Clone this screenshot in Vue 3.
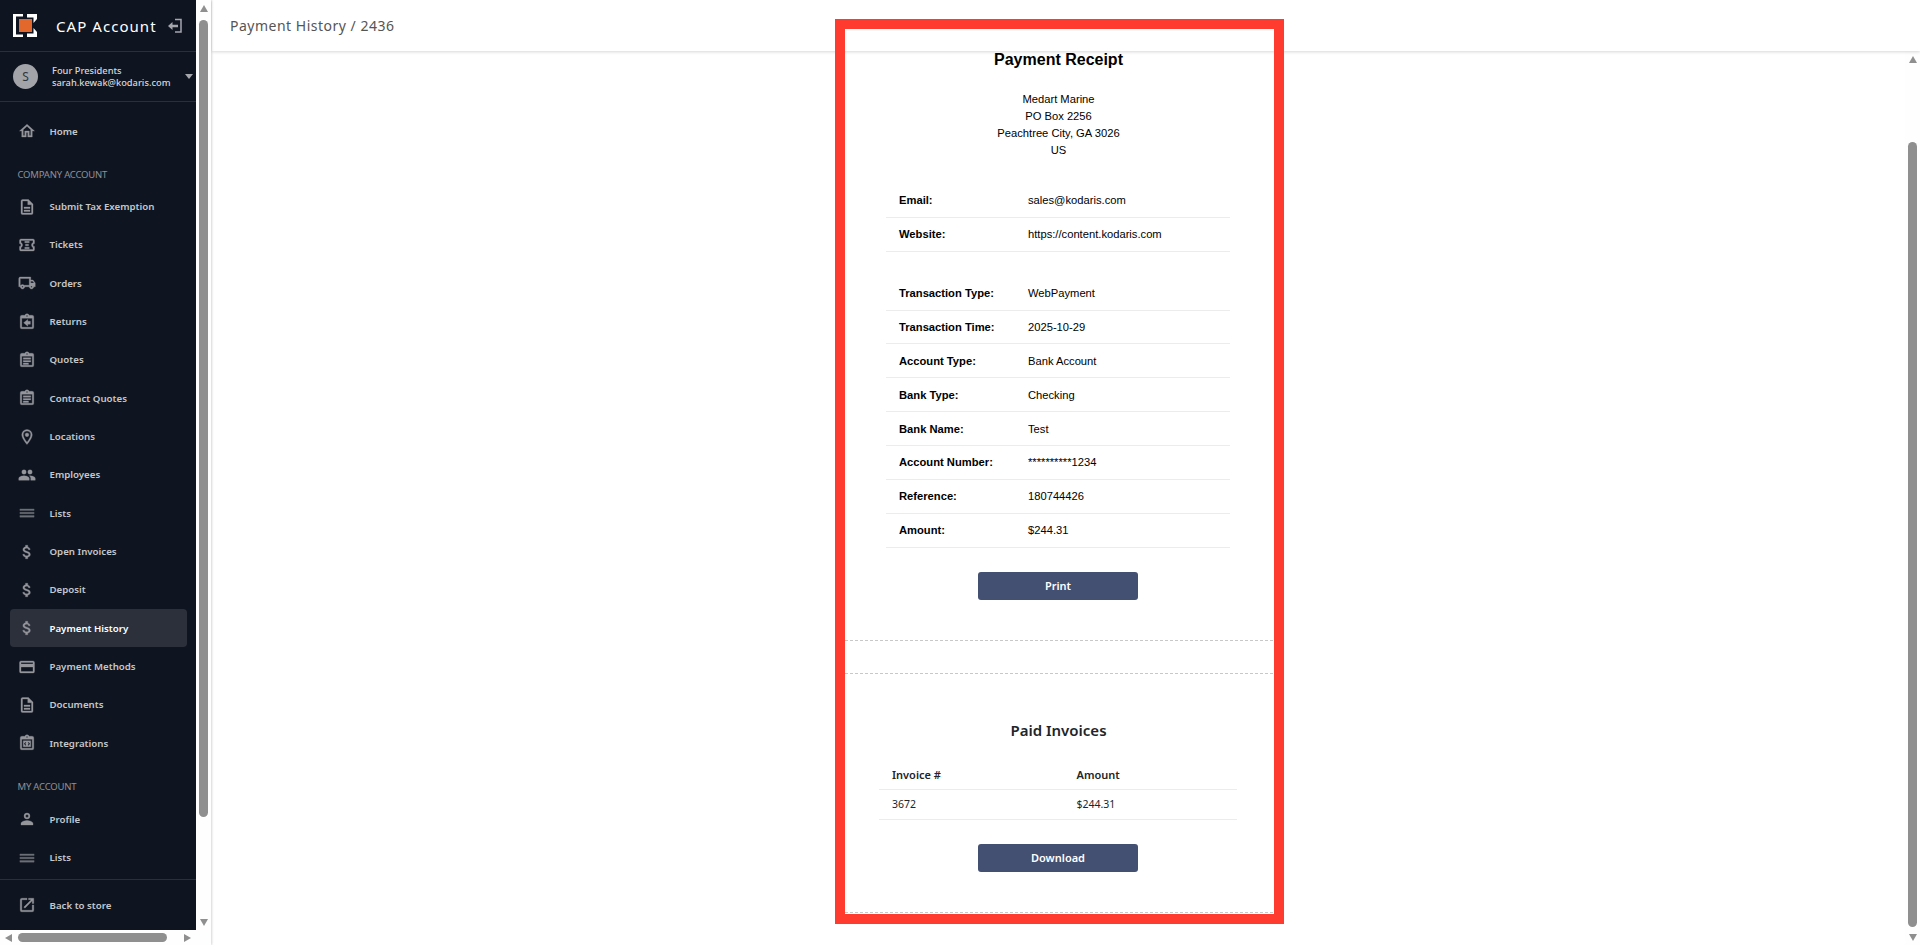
<script setup>
const p = {
  home: 'M12 5.700l5 4.500V18h-2v-6H9v6H7v-7.800l5-4.500M12 3L2 12h3v8h6v-6h2v6h6v-8h3L12 3z',
  doc: 'M14 2H6a2 2 0 0 0-2 2v16a2 2 0 0 0 2 2h12a2 2 0 0 0 2-2V8l-6-6zm4 18H6V4h7v5h5v11zM8 12h8v2H8zm0 4h8v2H8z',
  ticket: 'M22 10V6a2 2 0 0 0-2-2H4a2 2 0 0 0-2 2v4a2 2 0 0 1 0 4v4a2 2 0 0 0 2 2h16a2 2 0 0 0 2-2v-4a2 2 0 0 1 0-4zm-2-1.500a4 4 0 0 0 0 7V18H4v-2.500a4 4 0 0 0 0-7V6h16v2.500zM9 7h6v2H9zm1 4h4v2h-4zm-1 4h6v2H9z',
  truck: 'M20 8h-3V4H3c-1.100 0-2 .900-2 2v11h2c0 1.660 1.340 3 3 3s3-1.340 3-3h6c0 1.660 1.340 3 3 3s3-1.340 3-3h2v-5l-3-4zm-.500 1.500l1.960 2.500H17V9.500h2.500zM6 18c-.550 0-1-.450-1-1s.450-1 1-1 1 .450 1 1-.450 1-1 1zm2.220-3c-.550-.610-1.330-1-2.220-1s-1.670.390-2.220 1H3V6h12v9H8.220zM18 18c-.550 0-1-.450-1-1s.450-1 1-1 1 .450 1 1-.450 1-1 1z',
  ret: 'M19 3h-4.180A3 3 0 0 0 9.180 3H5a2 2 0 0 0-2 2v14a2 2 0 0 0 2 2h14a2 2 0 0 0 2-2V5a2 2 0 0 0-2-2zm-7 0a1 1 0 1 1 0 2 1 1 0 0 1 0-2zm7 16H5V7h14v12zM13 8.500l-5.500 4.500 5.500 4.500V15h3.500v-4H13V8.500z',
  quote: 'M19 3h-4.180A3 3 0 0 0 9.180 3H5a2 2 0 0 0-2 2v14a2 2 0 0 0 2 2h14a2 2 0 0 0 2-2V5a2 2 0 0 0-2-2zm-7 0a1 1 0 1 1 0 2 1 1 0 0 1 0-2zm7 16H5V7h14v12zM7 9h10v2H7zm0 3.500h10v2H7zM7 16h7v2H7z',
  pin: 'M12 2a7 7 0 0 0-7 7c0 5.250 7 13 7 13s7-7.750 7-13a7 7 0 0 0-7-7zm0 17c-2.300-2.900-5-7-5-10a5 5 0 0 1 10 0c0 3-2.700 7.100-5 10zm0-12.500a2.500 2.500 0 1 0 0 5 2.500 2.500 0 0 0 0-5z',
  people: 'M16 11a3 3 0 1 0 0-6 3 3 0 0 0 0 6zm-8 0a3 3 0 1 0 0-6 3 3 0 0 0 0 6zm0 2c-2.330 0-7 1.170-7 3.500V19h14v-2.500C15 14.170 10.330 13 8 13zm8 0c-.29 0-.62.020-.97.050 1.160.840 1.970 1.970 1.970 3.450V19h6v-2.500c0-2.330-4.670-3.500-7-3.500z',
  lists: 'M2.500 6.500h19v2.200h-19zM2.500 11h19v2h-19zM2.500 15.300h19v2.200h-19z',
  dollar: 'M11.800 10.900c-2.270-.590-3-1.200-3-2.150 0-1.090 1.010-1.850 2.700-1.850 1.780 0 2.440.850 2.500 2.100h2.210c-.070-1.720-1.120-3.300-3.210-3.810V3h-3v2.160c-1.940.420-3.500 1.680-3.500 3.610 0 2.310 1.910 3.460 4.700 4.130 2.500.600 3 1.480 3 2.410 0 .690-.490 1.790-2.700 1.790-2.060 0-2.870-.920-2.980-2.100H6.320c.120 2.190 1.760 3.420 3.680 3.830V21h3v-2.150c1.950-.370 3.500-1.500 3.500-3.550 0-2.840-2.430-3.810-4.700-4.400z',
  card: 'M20 4H4a2 2 0 0 0-2 2v12a2 2 0 0 0 2 2h16a2 2 0 0 0 2-2V6a2 2 0 0 0-2-2zm0 14H4v-6h16v6zm0-10H4V6h16v2z',
  integ: 'M19 3h-4.180A3 3 0 0 0 9.180 3H5a2 2 0 0 0-2 2v14a2 2 0 0 0 2 2h14a2 2 0 0 0 2-2V5a2 2 0 0 0-2-2zm-7 0a1 1 0 1 1 0 2 1 1 0 0 1 0-2zm7 16H5V7h14v12zM7 9h10v8H7V9zm3 1.500L7.800 13l2.200 2.500 1-1L9.800 13l1.200-1.500-1-1zm4 0l-1 1 1.200 1.500-1.200 1.500 1 1 2.200-2.500-2.200-2.500z',
  person: 'M12 4a4 4 0 1 0 0 8 4 4 0 0 0 0-8zm0 2a2 2 0 1 1 0 4 2 2 0 0 1 0-4zm0 8c-2.670 0-8 1.340-8 4v2h16v-2c0-2.660-5.330-4-8-4z',
  ext: 'M19 19H5V5h7V3H5a2 2 0 0 0-2 2v14a2 2 0 0 0 2 2h14a2 2 0 0 0 2-2v-7h-2v7zM14 3v2h3.590l-9.830 9.830 1.410 1.410L19 6.410V10h2V3h-7z'
}
const companyItems = [
  { n: 'Submit Tax Exemption', i: p.doc },
  { n: 'Tickets', i: p.ticket },
  { n: 'Orders', i: p.truck },
  { n: 'Returns', i: p.ret },
  { n: 'Quotes', i: p.quote },
  { n: 'Contract Quotes', i: p.quote },
  { n: 'Locations', i: p.pin },
  { n: 'Employees', i: p.people },
  { n: 'Lists', i: p.lists, dim: true },
  { n: 'Open Invoices', i: p.dollar },
  { n: 'Deposit', i: p.dollar },
  { n: 'Payment History', i: p.dollar, active: true },
  { n: 'Payment Methods', i: p.card },
  { n: 'Documents', i: p.doc },
  { n: 'Integrations', i: p.integ }
]
const accountItems = [
  { n: 'Profile', i: p.person },
  { n: 'Lists', i: p.lists, dim: true }
]
const contact = [['Email:', 'sales@kodaris.com'], ['Website:', 'https://content.kodaris.com']]
const details = [
  ['Transaction Type:', 'WebPayment'],
  ['Transaction Time:', '2025-10-29'],
  ['Account Type:', 'Bank Account'],
  ['Bank Type:', 'Checking'],
  ['Bank Name:', 'Test'],
  ['Account Number:', '**********1234'],
  ['Reference:', '180744426'],
  ['Amount:', '$244.31']
]
</script>

<template>
  <div class="page">
    <div class="left">
      <div class="left-top">
        <aside class="sidebar">
          <div class="brand">
            <svg class="logo" viewBox="0 0 24 23" width="24" height="23">
              <path fill="#fff" d="M0 0H10V2.500H3V20.500H10V23H0zM14 0H24V5L20.500 9V3.500H14zM14 23H24V18L20.500 14V19.500H14z"/>
              <rect x="6" y="5" width="13" height="13" fill="#e2682c"/>
            </svg>
            <span class="brand-name">CAP Account</span>
            <svg class="exit" viewBox="0 0 16 16" width="16" height="16">
              <path fill="none" stroke="#a5a7ad" stroke-width="1.500" d="M8 1.500h6v12.500H8"/>
              <path fill="#a5a7ad" d="M1 8l4.500-4v2.800H11v2.400H5.500V12z"/>
            </svg>
          </div>
          <div class="user">
            <div class="avatar">S</div>
            <div class="user-text">
              <div>Four Presidents</div>
              <div>sarah.kewak@kodaris.com</div>
            </div>
            <span class="caret"></span>
          </div>
          <nav class="nav">
            <a class="item">
              <svg viewBox="0 0 24 24"><path :d="p.home"/></svg>
              <span>Home</span>
            </a>
            <div class="section first">COMPANY ACCOUNT</div>
            <a v-for="it in companyItems" :key="it.n" class="item" :class="{ active: it.active, dim: it.dim }">
              <svg viewBox="0 0 24 24"><path :d="it.i"/></svg>
              <span>{{ it.n }}</span>
            </a>
            <div class="section">MY ACCOUNT</div>
            <a v-for="it in accountItems" :key="it.n" class="item" :class="{ dim: it.dim }">
              <svg viewBox="0 0 24 24"><path :d="it.i"/></svg>
              <span>{{ it.n }}</span>
            </a>
          </nav>
          <div class="foot">
            <a class="item">
              <svg viewBox="0 0 24 24"><path :d="p.ext"/></svg>
              <span>Back to store</span>
            </a>
          </div>
        </aside>
        <div class="vbar side-v">
          <i class="arrow up"></i>
          <b class="thumb side-thumb"></b>
          <i class="arrow down"></i>
        </div>
      </div>
      <div class="hbar">
        <i class="arrow lft"></i>
        <b class="hthumb"></b>
        <i class="arrow rgt"></i>
      </div>
    </div>

    <div class="main">
      <header class="topbar">Payment History / 2436</header>
      <div class="main-body">
        <div class="content">
          <div class="receipt">
            <section class="print-part">
              <h2>Payment Receipt</h2>
              <address>Medart Marine<br>PO Box 2256<br>Peachtree City, GA 3026<br>US</address>
              <div class="table">
                <div v-for="r in contact" :key="r[0]" class="row"><strong>{{ r[0] }}</strong><span>{{ r[1] }}</span></div>
              </div>
              <div class="table second">
                <div v-for="r in details" :key="r[0]" class="row"><strong>{{ r[0] }}</strong><span>{{ r[1] }}</span></div>
              </div>
              <div class="btn-wrap"><button class="btn">Print</button></div>
            </section>
            <div class="cut"></div>
            <section class="paid">
              <h3>Paid Invoices</h3>
              <div class="inv head"><span>Invoice #</span><span>Amount</span></div>
              <div class="inv"><span>3672</span><span>$244.31</span></div>
              <div class="btn-wrap"><button class="btn">Download</button></div>
            </section>
          </div>
        </div>
        <div class="vbar main-v">
          <i class="arrow up"></i>
          <b class="thumb main-thumb"></b>
          <i class="arrow down"></i>
        </div>
      </div>
    </div>
    <div class="frame"></div>
  </div>
</template>

<style scoped>
.page { position: relative; display: flex; width: 1920px; height: 945px; overflow: hidden; background: #fff; font-family: "Noto Sans", sans-serif; }
.left { width: 211px; flex: none; display: flex; flex-direction: column; box-shadow: 1px 0 2px rgba(0,0,0,.16); z-index: 2; }
.left-top { flex: 1; min-height: 0; display: flex; }
.sidebar { width: 196px; flex: none; background: #0f1520; display: flex; flex-direction: column; overflow: hidden; }
.brand { height: 51px; flex: none; display: flex; align-items: center; padding-left: 13px; border-bottom: 1px solid #2a2f3a; }
.logo { flex: none; }
.brand-name { margin-left: 19px; color: #fff; font-size: 15px; letter-spacing: 1.05px; white-space: nowrap; }
.exit { margin-left: 10px; flex: none; }
.user { height: 49px; flex: none; display: flex; align-items: center; padding-left: 13px; border-bottom: 1px solid #2a2f3a; }
.avatar { width: 25px; height: 25px; border-radius: 50%; background: #a2a4a9; color: #30343c; font-size: 12px; display: flex; align-items: center; justify-content: center; flex: none; }
.user-text { margin-left: 14px; color: #d5d7da; font-size: 9.300px; line-height: 12px; font-weight: 500; white-space: nowrap; width: 133px; flex: none; }
.caret { border: 4.500px solid transparent; border-top: 5px solid #a5a7ad; border-bottom: 0; flex: none; }
.nav { flex: 1; min-height: 0; padding-top: 10px; }
.item { display: flex; align-items: center; height: 38.350px; margin: 0 9px 0 10px; padding-left: 8px; border-radius: 4px; color: #c5c7cb; font-size: 9.700px; font-weight: 600; white-space: nowrap; }
.item svg { width: 18px; height: 18px; fill: #94969c; stroke: #94969c; stroke-width: .4; flex: none; }
.item.dim svg { opacity: .7; }
.item span { margin-left: 13.500px; }
.item.active { background: #2c303b; color: #fff; }
.section { color: #8f9196; font-size: 9.500px; letter-spacing: -.2px; height: 18px; line-height: 18px; padding-left: 17.500px; margin-top: 15.400px; margin-bottom: 4.300px; }
.section.first { margin-top: 16px; margin-bottom: 3px; }
.foot { flex: none; height: 50px; border-top: 1px solid #2a2f3a; display: flex; align-items: center; }
.foot .item { flex: 1; }
.vbar { width: 15px; flex: none; background: #fefefe; display: flex; flex-direction: column; align-items: center; }
.thumb { display: block; width: 9px; border-radius: 5px; background: #8f8f8f; }
.side-thumb { height: 797px; margin-top: 8px; }
.main-thumb { height: 785px; margin-top: 79px; }
.arrow { display: block; width: 0; height: 0; border: 4px solid transparent; flex: none; }
.arrow.up { border-top: 0; border-bottom: 7px solid #8f8f8f; margin-top: 5px; }
.arrow.down { border-bottom: 0; border-top: 7px solid #8f8f8f; margin-top: auto; margin-bottom: 4px; }
.hbar { height: 15px; flex: none; background: #fefefe; display: flex; align-items: center; padding: 0 4px; }
.hthumb { display: block; width: 149px; height: 9px; border-radius: 5px; background: #8f8f8f; margin-left: 6px; }
.arrow.lft { border-left: 0; border-right: 7px solid #8f8f8f; margin-left: 1px; }
.arrow.rgt { border-right: 0; border-left: 7px solid #8f8f8f; margin-left: 17px; }
.main { flex: 1; min-width: 0; display: flex; flex-direction: column; margin-left: 1px; }
.topbar { height: 51px; flex: none; padding-left: 18px; line-height: 51px; color: #555; font-size: 14px; letter-spacing: .5px; box-shadow: 0 1px 3px rgba(0,0,0,.16); background: #fff; position: relative; z-index: 1; }
.main-body { flex: 1; min-height: 0; display: flex; }
.content { flex: 1; min-width: 0; display: flex; justify-content: center; overflow: hidden; }
.receipt { width: 428px; flex: none; color: #000; }
.print-part { font-family: "Liberation Sans", Arial, sans-serif; font-size: 11.200px; }
h2 { margin: 0; text-align: center; font-size: 16px; font-weight: 700; line-height: 18px; }
address { margin-top: 22px; text-align: center; font-style: normal; line-height: 17px; }
.table { margin: 25px 43px 0 41.500px; }
.table.second { margin-top: 25px; }
.row { height: 33.860px; display: flex; align-items: center; border-bottom: 1px solid #ececec; box-sizing: border-box; padding-left: 13px; }
.row strong { width: 129px; flex: none; }
.btn-wrap { display: flex; justify-content: center; margin-top: 24px; padding-right: 1px; }
.btn { width: 160px; height: 28px; border: 0; border-radius: 3px; background: #445071; color: #fff; font-size: 11px; font-weight: 600; font-family: "Noto Sans", sans-serif; padding: 0; }
.cut { height: 32px; margin-top: 40px; border-top: 1px dashed #c8c8c8; border-bottom: 1px dashed #c8c8c8; }
.paid { color: #212529; text-align: center; padding-bottom: 40px; border-bottom: 1px dashed #c8c8c8; }
h3 { margin: 0; padding-top: 46.500px; font-size: 15px; font-weight: 600; line-height: 20px; }
.inv { display: flex; margin: 0 36px 0 34.500px; height: 30px; align-items: center; font-size: 10.500px; border-bottom: 1px solid #ececec; box-sizing: border-box; text-align: left; padding-left: 13px; }
.inv span:first-child { width: 184.500px; flex: none; }
.inv.head { margin-top: 19.500px; font-weight: 600; font-size: 11px; }
.frame { position: absolute; left: 835px; top: 19px; width: 449px; height: 905px; box-sizing: border-box; border: 10px solid #ff3b30; z-index: 5; pointer-events: none; }
</style>
